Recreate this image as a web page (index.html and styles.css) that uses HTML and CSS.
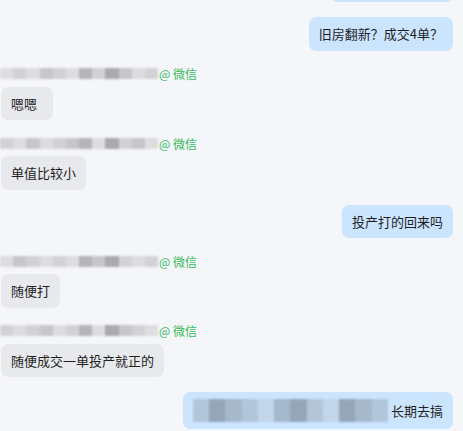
FILE: index.html
```html
<!DOCTYPE html>
<html lang="zh-CN">
<head>
    <meta charset="UTF-8">
    <meta name="viewport" content="width=device-width, initial-scale=1.0">
    <title>聊天记录</title>
    <link rel="stylesheet" href="styles.css">
</head>
<body>

    <div class="chat">
        <!-- previous message, scrolled out of view -->
        <div class="msg mine">
            <div class="bubble cut"></div>
        </div>

        <div class="msg mine">
            <div class="bubble">旧房翻新？成交4单？</div>
        </div>

        <div class="msg theirs">
            <div class="sender">
                <span class="mosaic">
                    <i class="m1"></i><i class="m2"></i><i class="m1"></i><i class="m3"></i><i class="m2"></i><i class="m1"></i><i class="m4"></i><i class="m2"></i><i class="m5"></i><i class="m3"></i><i class="m1"></i><i class="m2"></i>
                </span>
                <span class="source">@ 微信</span>
            </div>
            <div class="bubble">嗯嗯</div>
        </div>

        <div class="msg theirs">
            <div class="sender">
                <span class="mosaic">
                    <i class="m2"></i><i class="m1"></i><i class="m3"></i><i class="m1"></i><i class="m2"></i><i class="m3"></i><i class="m4"></i><i class="m1"></i><i class="m5"></i><i class="m2"></i><i class="m3"></i><i class="m1"></i>
                </span>
                <span class="source">@ 微信</span>
            </div>
            <div class="bubble">单值比较小</div>
        </div>

        <div class="msg mine">
            <div class="bubble">投产打的回来吗</div>
        </div>

        <div class="msg theirs">
            <div class="sender">
                <span class="mosaic">
                    <i class="m1"></i><i class="m3"></i><i class="m2"></i><i class="m1"></i><i class="m2"></i><i class="m1"></i><i class="m4"></i><i class="m3"></i><i class="m5"></i><i class="m2"></i><i class="m1"></i><i class="m2"></i>
                </span>
                <span class="source">@ 微信</span>
            </div>
            <div class="bubble">随便打</div>
        </div>

        <div class="msg theirs">
            <div class="sender">
                <span class="mosaic">
                    <i class="m2"></i><i class="m1"></i><i class="m2"></i><i class="m3"></i><i class="m1"></i><i class="m2"></i><i class="m4"></i><i class="m1"></i><i class="m5"></i><i class="m3"></i><i class="m2"></i><i class="m1"></i>
                </span>
                <span class="source">@ 微信</span>
            </div>
            <div class="bubble">随便成交一单投产就正的</div>
        </div>

        <div class="msg mine">
            <div class="bubble">
                <span class="mosaic blue">
                    <i class="b1"></i><i class="b2"></i><i class="b3"></i><i class="b1"></i><i class="b4"></i><i class="b3"></i><i class="b2"></i><i class="b1"></i><i class="b4"></i><i class="b2"></i><i class="b3"></i><i class="b1"></i>
                </span>长期去搞
            </div>
        </div>
    </div>

</body>
</html>
```

FILE: styles.css
```css
body {
    margin: 0;
    background-color: #f5f6fa;
    font-family: "Noto Sans CJK SC", "Noto Sans", sans-serif;
    color: #1f1f1f;
    overflow: hidden;
}

.chat {
    display: flex;
    flex-direction: column;
    gap: 15px;
    padding: 0 10px 0 1px;
    margin-top: -31.5px;
}

.msg {
    display: flex;
    flex-direction: column;
}

.msg.mine {
    align-items: flex-end;
}

.msg.theirs {
    align-items: flex-start;
}

.bubble {
    display: flex;
    align-items: center;
    box-sizing: border-box;
    min-width: 52px;
    padding: 7px 10px;
    font-size: 13px;
    line-height: 19.5px;
    border-radius: 7px;
    white-space: nowrap;
}

.bubble.cut {
    width: 123px;
    height: 33.5px;
}

.mine .bubble {
    background-color: #cce5ff;
}

.theirs .bubble {
    background-color: #e8e9ed;
}

.sender {
    display: flex;
    align-items: center;
    height: 16px;
    margin: 0 0 5px -1px;
}

.mosaic {
    display: flex;
    width: 158px;
    height: 11px;
    filter: blur(1.2px);
}

.mosaic i {
    flex: 1;
    height: 100%;
}

.m1 { background-color: #dcdde0; }
.m2 { background-color: #d1d2d5; }
.m3 { background-color: #c6c7ca; }
.m4 { background-color: #b4b5b8; }
.m5 { background-color: #a9aaad; }

.source {
    margin-left: 1px;
    font-size: 12px;
    color: #36bb5b;
}

.mosaic.blue {
    width: 195px;
    height: 23px;
    margin-right: 3px;
    filter: blur(1px);
}

.b1 { background-color: #b3c6d9; }
.b2 { background-color: #95a6b8; }
.b3 { background-color: #a6b8cb; }
.b4 { background-color: #c2d5e9; }
```
